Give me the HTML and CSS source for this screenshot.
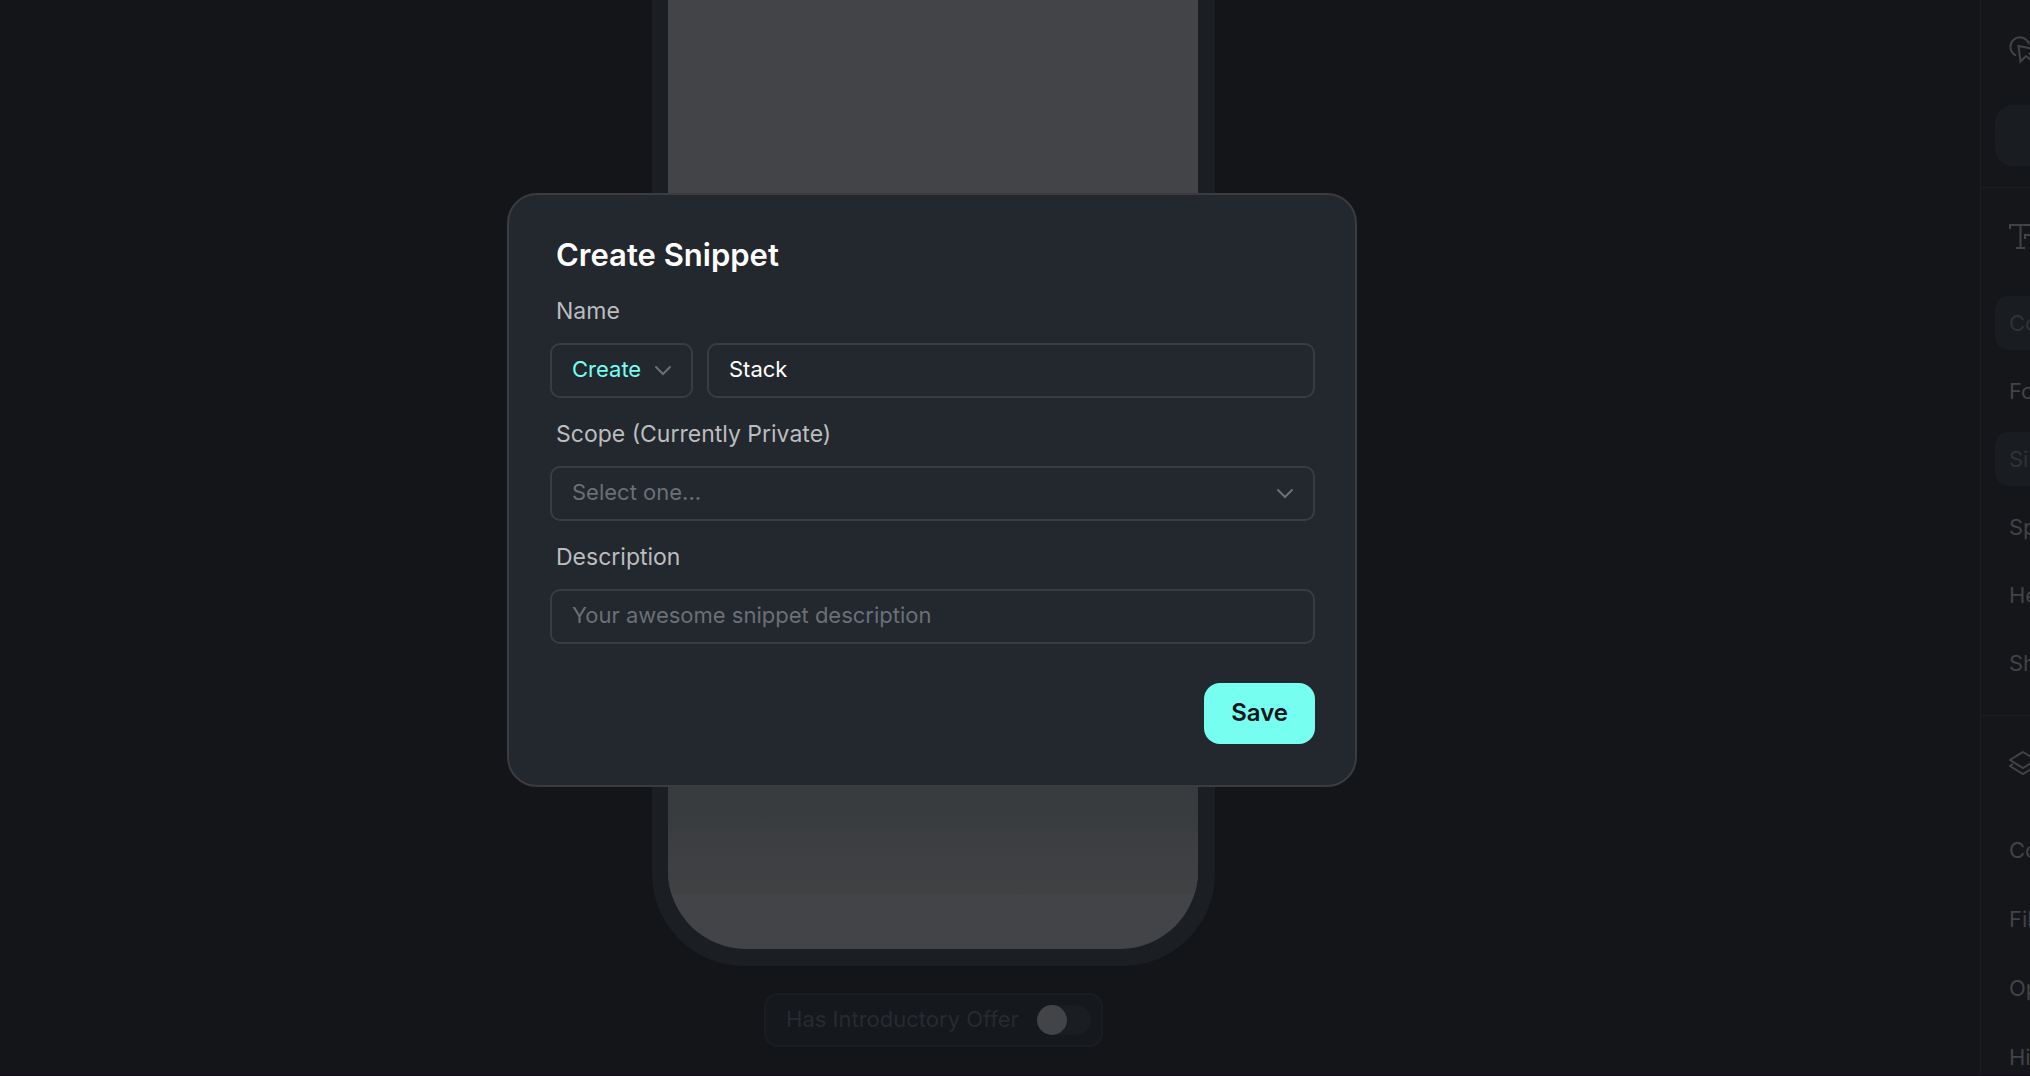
FILE: index.html
```html
<!DOCTYPE html>
<html lang="en">

<head>
    <meta charset="UTF-8">
    <meta name="viewport" content="width=device-width, initial-scale=1.0">
    <title>Create Snippet</title>
    <link rel="stylesheet" href="styles.css">
</head>

<body>
    <div class="editor">
        <main class="canvas">
            <div class="phone">
                <div class="screen">
                    <div class="fade"></div>
                </div>
            </div>
            <label class="offer">
                <span>Has Introductory Offer</span>
                <input type="checkbox" class="switch">
            </label>
        </main>

        <aside class="panel">
            <section class="group group-tap">
                <svg class="icon" viewBox="0 0 28 28" aria-hidden="true">
                    <path d="M7 19.500A9.500 9.500 0 1 1 20 8" />
                    <path d="M9.500 10L27 13.500L20.500 17.500L26 24L24 26L17 20L11.500 25.500Z" />
                </svg>
                <button class="box box-tall" type="button" aria-label="Tap behavior"></button>
            </section>
            <section class="group group-text">
                <svg class="icon" viewBox="0 0 28 28" aria-hidden="true">
                    <path d="M1 6V2H22V6M11.500 2V25M7 25H16M16 16V12H28M23 12V25" />
                </svg>
                <button class="box" type="button">Co</button>
                <div class="row">Fo</div>
                <button class="box" type="button">Siz</button>
                <div class="row">Sp</div>
                <div class="row">He</div>
                <div class="row">Sh</div>
            </section>
            <section class="group group-layer">
                <svg class="icon" viewBox="0 0 28 28" aria-hidden="true">
                    <path d="M14 3L27 11L14 19L1 11Z" />
                    <path d="M4 15L1 17L14 25L27 17L24 15" />
                </svg>
                <div class="row">Co</div>
                <div class="row">Fil</div>
                <div class="row">Op</div>
                <div class="row">Hi</div>
            </section>
        </aside>
    </div>

    <div class="overlay">
        <form class="modal" role="dialog" aria-labelledby="title">
            <h1 id="title">Create Snippet</h1>

            <label for="name">Name</label>
            <div class="fields">
                <div class="select select-action">
                    <select aria-label="Action">
                        <option>Create</option>
                    </select>
                    <svg class="chevron" viewBox="0 0 16 10" aria-hidden="true">
                        <path d="M1 1L8 8L15 1" />
                    </svg>
                </div>
                <input type="text" id="name" value="Stack">
            </div>

            <label for="scope">Scope (Currently Private)</label>
            <div class="fields">
                <div class="select">
                    <select id="scope">
                        <option>Select one...</option>
                    </select>
                    <svg class="chevron" viewBox="0 0 16 10" aria-hidden="true">
                        <path d="M1 1L8 8L15 1" />
                    </svg>
                </div>
            </div>

            <label for="description">Description</label>
            <div class="fields">
                <input type="text" id="description" placeholder="Your awesome snippet description">
            </div>

            <button class="save" type="submit">Save</button>
        </form>
    </div>
</body>

</html>
```
FILE: styles.css
```css
* {
    box-sizing: border-box;
}

body {
    margin: 0;
    height: 100vh;
    overflow: hidden;
    background: #131519;
    color: #ffffff;
    font-family: Inter, "Liberation Sans", sans-serif;
    font-size: 22px;
}

button,
input,
select {
    font: inherit;
    color: inherit;
}

/* editor behind the dialog */
.editor {
    display: flex;
    height: 100vh;
    border-bottom: 1px solid #150a1a;
}

.canvas {
    flex: 1;
    display: flex;
    flex-direction: column;
    align-items: center;
    padding: 0 113px 28px 0;
}

.phone {
    flex: 1;
    width: 563px;
    padding: 0 17px 17px 16px;
    border-radius: 0 0 92px 92px;
    background: #1b1e22;
}

.screen {
    display: flex;
    flex-direction: column;
    justify-content: flex-end;
    height: 100%;
    padding-bottom: 55px;
    border-radius: 0 0 78px 78px;
    background: #434447;
    overflow: hidden;
}

.fade {
    height: 108px;
    background: linear-gradient(#393c3f 30%, #3f4043 65%, #404143);
}

.offer {
    display: flex;
    align-items: center;
    gap: 18px;
    height: 54px;
    margin-top: 27px;
    padding: 0 10px 0 20px;
    border: 2px solid #1a1d21;
    border-radius: 14px;
    background: #15181c;
    color: #272b30;
}

.offer span {
    padding-bottom: 2px;
}

.switch {
    appearance: none;
    width: 54px;
    height: 30px;
    margin: 0;
    border-radius: 15px;
    background: #1a1d21;
}

.switch::before {
    content: "";
    display: block;
    width: 30px;
    height: 30px;
    border-radius: 50%;
    background: #434447;
}

.panel {
    flex: 0 0 50px;
    border-left: 1px solid #1b1e22;
    overflow: hidden;
    white-space: nowrap;
    background: #14161a;
    color: #414347;
}

.group {
    display: flex;
    flex-direction: column;
    gap: 14px;
    padding-left: 14px;
    border-bottom: 1px solid #1b1e22;
}

.group-tap {
    gap: 41px;
    padding-top: 36px;
    padding-bottom: 21px;
}

.group-text {
    padding-top: 35px;
    padding-bottom: 25px;
}

.group-text .icon {
    margin-bottom: 31px;
}

.group-layer {
    gap: 15px;
    padding-top: 33px;
    border-bottom: 0;
}

.group-layer .icon {
    margin-bottom: 31px;
}

.icon {
    flex: none;
    width: 28px;
    height: 28px;
    margin-left: 14px;
    fill: none;
    stroke: #414347;
    stroke-width: 2;
}

.row,
.box {
    flex: none;
    width: 240px;
    height: 54px;
    padding: 0 14px;
    line-height: 54px;
    text-align: left;
}

.box {
    border: 0;
    border-radius: 14px;
    background: #191c20;
    color: #303337;
}

.box-tall {
    height: 61px;
    border-radius: 18px;
}

/* dialog */
.overlay {
    position: fixed;
    inset: 0;
    display: flex;
    align-items: center;
    justify-content: center;
    padding: 0 166px 96px 0;
}

.modal {
    display: flex;
    flex-direction: column;
    width: 850px;
    padding: 42px 40px 41px 41px;
    border: 2px solid #3a3c3f;
    border-radius: 30px;
    background: #23272e;
}

h1 {
    margin: 0 6px 24px;
    font-size: 31px;
    font-weight: 600;
    line-height: 36px;
}

.modal label {
    margin: 0 6px 18px;
    color: #bbbdbf;
    font-size: 23px;
    line-height: 28px;
}

.fields {
    display: flex;
    gap: 14px;
    margin-bottom: 22px;
}

.modal input,
.modal select {
    width: 100%;
    height: 55px;
    padding: 0 20px 3px;
    border: 2px solid #3a3c3f;
    border-radius: 10px;
    background: transparent;
    outline: 0;
}

.modal input::placeholder {
    color: #6b6f76;
    opacity: 1;
}

.select {
    position: relative;
    flex: 1;
}

.modal select {
    appearance: none;
    color: #6b6f76;
}

.modal .select-action {
    flex: 0 0 143px;
}

.modal .select-action select {
    color: #76fff1;
}

.chevron {
    position: absolute;
    top: 23px;
    right: 22px;
    width: 16px;
    height: 10px;
    fill: none;
    stroke: #6b6f76;
    stroke-width: 2;
    stroke-linecap: round;
    pointer-events: none;
}

.save {
    align-self: flex-end;
    height: 61px;
    margin-top: 17px;
    padding: 0 27px 2px;
    border: 0;
    border-radius: 16px;
    background: #76fff1;
    color: #131519;
    font-size: 24px;
    font-weight: 600;
}
```
